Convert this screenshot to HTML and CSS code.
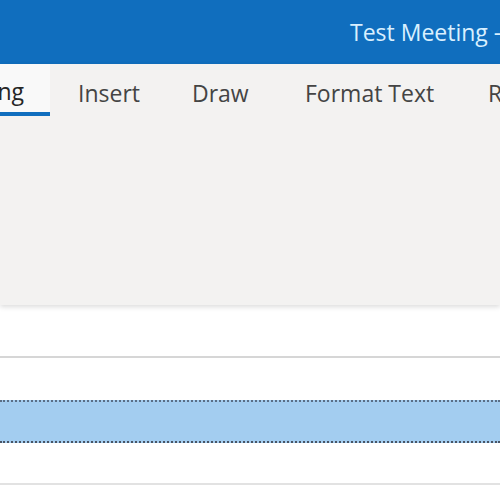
FILE: index.html
```html
<!DOCTYPE html>
<html>
<head>
<meta charset="utf-8">
<link rel="stylesheet" href="styles.css">
</head>
<body>
<div class="page">
  <header class="titlebar">
    <span class="title">Test Meeting - Meeting</span>
  </header>
  <section class="ribbon">
    <nav class="tabs">
      <span class="tab selected"><span class="tab-label">Meeting</span></span>
      <span class="tab t-insert">Insert</span>
      <span class="tab t-draw">Draw</span>
      <span class="tab t-format">Format Text</span>
      <span class="tab t-review">Review</span>
    </nav>
    <div class="ribbon-body"></div>
  </section>
  <div class="form">
    <div class="row r1"></div>
    <div class="row r2"></div>
    <div class="row r3 highlighted"></div>
    <div class="row r4"></div>
  </div>
</div>
</body>
</html>
```

FILE: styles.css
```css
html, body {
  margin: 0;
  padding: 0;
  background: #ffffff;
  overflow: hidden;
}
.page {
  width: 500px;
  height: 500px;
  overflow: hidden;
  font-family: "Open Sans", "Noto Sans", sans-serif;
  display: flex;
  flex-direction: column;
}
.titlebar {
  height: 64px;
  background: #106ebe;
  display: flex;
  align-items: center;
  padding-left: 350px;
  white-space: nowrap;
  flex-shrink: 0;
}
.title {
  color: #d9f0ff;
  font-size: 23px;
  margin-top: 0px;
}
.ribbon {
  height: 241px;
  background: #f3f2f1;
  display: flex;
  flex-direction: column;
  box-shadow: 0 2px 5px rgba(0,0,0,0.14);
  position: relative;
  z-index: 1;
  flex-shrink: 0;
}
.tabs {
  height: 52px;
  display: flex;
  white-space: nowrap;
  flex-shrink: 0;
}
.tab {
  font-size: 23px;
  color: #444444;
  display: flex;
  align-items: center;
  padding-top: 5px;
  box-sizing: border-box;
  height: 52px;
  flex-shrink: 0;
}
.tab.selected {
  width: 50px;
  justify-content: flex-end;
  overflow: hidden;
  padding-right: 26px;
  background: #f9f9f9;
  color: #262626;
  border-bottom: 4px solid #106ebe;
  padding-top: 5px;
}
.tab-label { flex-shrink: 0; }
.t-insert { margin-left: 28px; width: 114px; }
.t-draw { width: 113px; }
.t-format { width: 183px; }
.ribbon-body { flex: 1; }
.form {
  display: flex;
  flex-direction: column;
}
.row {
  border-bottom: 1px solid #d2d2d2;
  box-sizing: border-box;
}
.r1 { height: 53px; border-bottom: 2px solid #d6d6d6; }
.r2 { height: 42px; border-bottom: none; }
.r3.highlighted {
  height: 43px;
  background: #a3cdf0;
  border-top: 2px dotted #5a6e86;
  border-bottom: 2px dotted #4a5566;
}
.r4 {
  height: 42px;
  border-bottom: 2px solid #e2e2e2;
}
```
